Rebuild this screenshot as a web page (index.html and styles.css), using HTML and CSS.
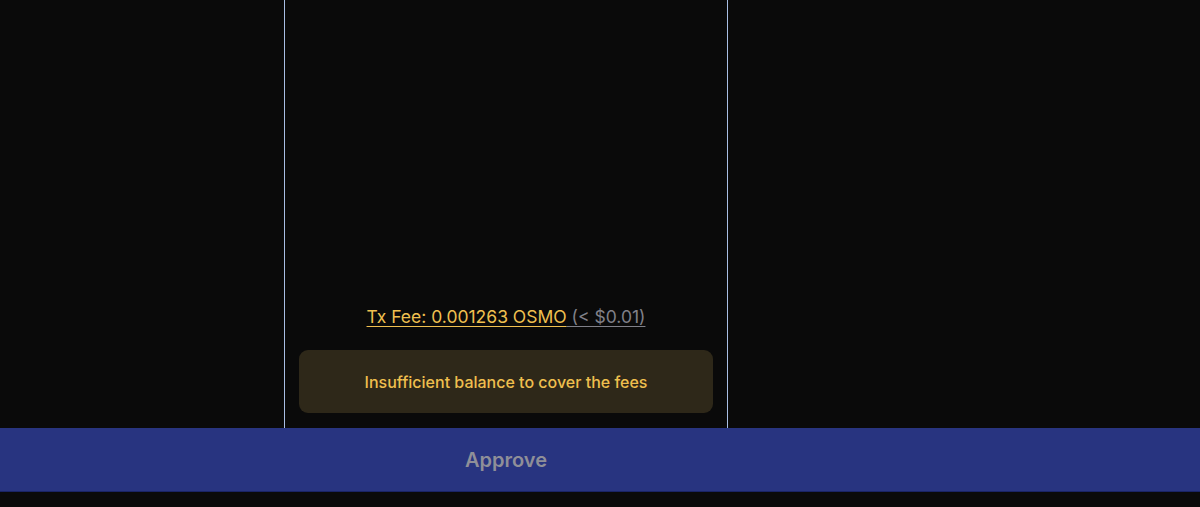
FILE: index.html
```html
<!DOCTYPE html>
<html>
<head>
    <title>Approve Transaction</title>
    <link rel="stylesheet" href="styles.css">
</head>
<body>
    <div class="panel">
        <div class="fee">
            <span class="fee-amount">Tx Fee: 0.001263 OSMO</span><span class="fee-usd"> (&lt; $0.01)</span>
        </div>
        <div class="aviso">Insufficient balance to cover the fees</div>
    </div>
    <div class="rodape">
        <button class="btn-aprovar" disabled>Approve</button>
    </div>
</body>
</html>
```

FILE: styles.css
```css
html, body { margin: 0; padding: 0; }
body { background: #0a0a0a; font-family: Inter, "Noto Sans", sans-serif; height: 507px; overflow: hidden; }
.panel { width: 444px; height: 428px; margin-left: 284px; border-left: 1px solid #a9bfe4; border-right: 1px solid #a9bfe4; display: flex; flex-direction: column; justify-content: flex-end; padding: 0 14px 15px; box-sizing: border-box; }
.fee { text-align: center; font-size: 17.5px; line-height: 22px; margin-bottom: 22px; }
.fee-amount { color: #f0c050; text-decoration: underline; text-underline-offset: 3px; }
.fee-usd { color: #808088; text-decoration: underline; text-underline-offset: 3px; }
.aviso { background: #2e2819; color: #efbf4e; border-radius: 9px; height: 63px; display: flex; align-items: center; justify-content: center; font-size: 16px; font-weight: 500; }
.rodape { background: #283480; height: 63px; border-bottom: 1px solid #1a2466; }
.btn-aprovar { width: 444px; margin-left: 284px; height: 63px; background: none; border: none; color: #8f8f98; font-family: inherit; font-size: 20px; font-weight: 600; }
```
